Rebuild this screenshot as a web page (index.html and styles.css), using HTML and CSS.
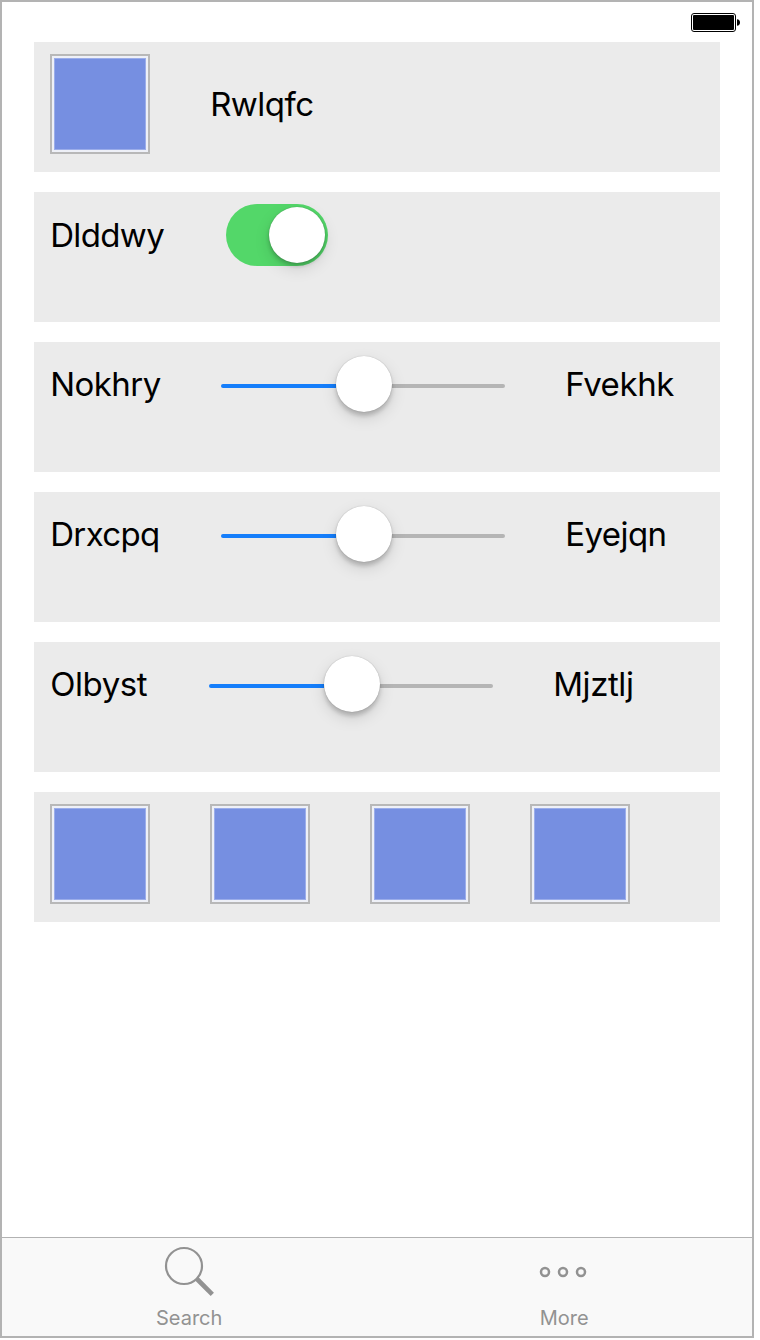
FILE: index.html
```
<!DOCTYPE html>
<html lang="en">
<head>
<meta charset="utf-8">
<title>Controls</title>
<link rel="stylesheet" href="styles.css">
</head>
<body>
<div class="screen">
  <header class="status">
    <svg class="battery" width="50" height="20" viewBox="0 0 50 20">
      <rect x="0.5" y="0.5" width="44" height="18" rx="2.5" fill="#fff" stroke="#000"/>
      <rect x="2" y="2" width="41" height="15" rx="1" fill="#000"/>
      <path d="M46 6.2Q49 6.5 49 9.5T46 12.8Z" fill="#000"/>
    </svg>
  </header>
  <main class="rows">
    <section class="row">
      <span class="swatch"></span>
      <span class="label label-middle">Rwlqfc</span>
    </section>
    <section class="row">
      <span class="label label-switch w-116 tight">Dlddwy</span>
      <span class="switch"><span class="knob"></span></span>
    </section>
    <section class="row">
      <span class="label w-111">Nokhry</span>
      <span class="slider"><span class="fill"></span><span class="knob knob-slider"></span><span class="rest"></span></span>
      <span class="label loose">Fvekhk</span>
    </section>
    <section class="row">
      <span class="label w-111 tight">Drxcpq</span>
      <span class="slider"><span class="fill"></span><span class="knob knob-slider"></span><span class="rest"></span></span>
      <span class="label">Eyejqn</span>
    </section>
    <section class="row">
      <span class="label w-99 loose">Olbyst</span>
      <span class="slider"><span class="fill"></span><span class="knob knob-slider"></span><span class="rest"></span></span>
      <span class="label loose">Mjztlj</span>
    </section>
    <section class="row">
      <span class="swatch"></span>
      <span class="swatch"></span>
      <span class="swatch"></span>
      <span class="swatch"></span>
    </section>
  </main>
  <nav class="tabs">
    <div class="tab">
      <svg class="tab-icon" width="52" height="52" viewBox="0 0 52 52" fill="none" stroke="#929292">
        <circle cx="21" cy="20" r="18" stroke-width="2.2"/>
        <path d="M33.5 32.5L49.3 48.3" stroke-width="4.6"/>
      </svg>
      <span class="tab-text">Search</span>
    </div>
    <div class="tab tab-more">
      <svg class="tab-icon" width="52" height="52" viewBox="0 0 52 52" fill="none" stroke="#929292" stroke-width="2.5">
        <circle cx="7" cy="26" r="4"/>
        <circle cx="25" cy="26" r="4"/>
        <circle cx="43" cy="26" r="4"/>
      </svg>
      <span class="tab-text">More</span>
    </div>
  </nav>
</div>
</body>
</html>
```
FILE: styles.css
```
* { box-sizing: border-box; }
body { margin: 0; background: #fff; font-family: Inter, "Liberation Sans", sans-serif; }
.screen {
  width: 754px; height: 1338px;
  border: 2px solid #b3b3b3;
  display: flex; flex-direction: column;
  background: #fff;
}
.status { height: 40px; padding: 11px 11px 0 0; display: flex; justify-content: flex-end; }
.battery { display: block; }
.rows { flex: 1; padding: 0 32px; display: flex; flex-direction: column; gap: 20px; }
.row {
  height: 130px; padding: 12px 16px;
  background: #ebebeb;
  display: flex; align-items: flex-start; gap: 60px;
}
.swatch {
  width: 100px; height: 100px; flex: none;
  border: 2px solid #b8b8b8; padding: 2px;
  background: #768fe1 content-box;
  box-shadow: inset 0 0 0 2px #eef0f7, inset 0 0 0 3px #9badea;
}
.label {
  font-size: 33px; line-height: 40px; letter-spacing: -0.55px;
  margin-top: 10px; padding-left: 0.2px;
  color: #000; white-space: nowrap; flex: none;
}
.tight { letter-spacing: -0.65px; }
.loose { letter-spacing: -0.42px; }
.label-middle { margin-top: 30px; }
.label-switch { margin-top: 11px; }
.w-116 { width: 116px; }
.w-111 { width: 111px; }
.w-99 { width: 99px; }
.switch {
  width: 102px; height: 62px; border-radius: 31px; padding: 3px;
  background: #53d769;
  display: flex; justify-content: flex-end;
}
.knob {
  width: 56px; height: 56px; border-radius: 50%; flex: none;
  background: #fff;
  box-shadow: 0 6px 16px rgba(0,0,0,.13), 0 4px 4px rgba(0,0,0,.18), 0 0 1px rgba(0,0,0,.3);
}
.switch .knob { box-shadow: 0 6px 16px rgba(0,0,0,.12), 0 3px 4px rgba(0,0,0,.2), 0 0 1px rgba(0,0,0,.3); }
.slider { width: 284px; height: 64px; display: flex; align-items: center; flex: none; }
.knob-slider { margin-top: -4px; z-index: 1; }
.fill, .rest { height: 4px; }
.fill { width: 115px; background: #157efb; border-radius: 2px 0 0 2px; }
.rest { width: 113px; background: #b5b5b5; border-radius: 0 2px 2px 0; }
.tabs { height: 99px; border-top: 1px solid #b2b2b2; background: #f9f9f9; display: flex; }
.tab { width: 374px; display: flex; flex-direction: column; align-items: center; padding-top: 8px; }
.tab-more { width: 376px; }
.tab-icon { display: block; }
.tab-text { font-size: 20px; line-height: 24px; margin-top: 8px; padding-left: 0.4px; color: #929292; }
```
